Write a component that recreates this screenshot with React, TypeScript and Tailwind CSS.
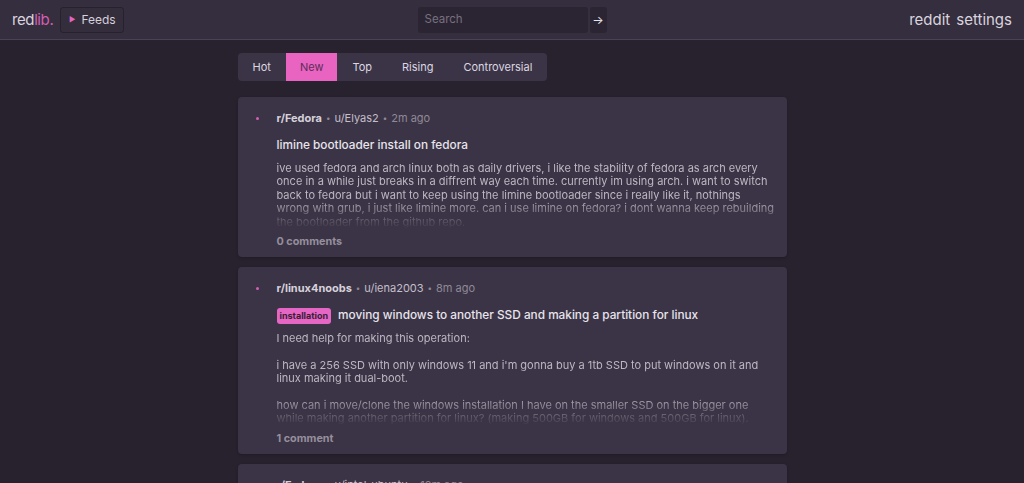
import React from "react";

const font = { fontFamily: "Inter, 'Noto Sans', sans-serif" };

function Header() {
  return (
    <header className="h-[40px] pt-[1px] flex items-center bg-[#352e3e] border-b border-[#4a4356] px-3">
      <div className="flex-1 flex items-center gap-[7px]">
        <div className="text-[15px] tracking-[-0.4px] text-[#d9d4de]">
          red<span className="text-[#d45fb5]">lib.</span>
        </div>
        <div className="h-[26px] w-[64px] flex items-center justify-center gap-[6px] rounded-[3px] border border-[#27212d] bg-[#342d3c] text-[12px] text-[#d6d1db]">
          <span className="text-[#e066c1] text-[7px]">▶</span>
          <span>Feeds</span>
        </div>
      </div>
      <div className="flex items-center gap-[2px]">
        <div className="h-[26px] w-[170px] rounded-[3px] bg-[#2b2533] flex items-center px-[7px] text-[11.5px] text-[#77707f]">
          Search
        </div>
        <div className="h-[26px] w-[17px] rounded-[3px] bg-[#2b2533] flex items-center justify-center text-[#e8e4ec] text-[12px]">
          →
        </div>
      </div>
      <div className="flex-1 flex items-center justify-end gap-[6px] text-[15px] text-[#d9d4de]">
        <span>reddit</span>
        <span>settings</span>
      </div>
    </header>
  );
}

function Tabs() {
  const tabs = ["Hot", "New", "Top", "Rising", "Controversial"];
  return (
    <div className="flex h-[28px] w-fit rounded-[4px] bg-[#3b3446] overflow-hidden text-[11px]">
      {tabs.map((t) => (
        <div
          key={t}
          className={
            t === "New"
              ? "px-[14px] flex items-center bg-[#e864c0] text-[#5e2d59]"
              : "px-[15px] flex items-center text-[#dcd7e1]"
          }
        >
          {t}
        </div>
      ))}
    </div>
  );
}

type PostProps = {
  sub: string;
  user: string;
  time: string;
  flair?: string;
  title: string;
  body: string[];
  comments: string;
};

function Post({ sub, user, time, flair, title, body, comments }: PostProps) {
  return (
    <div className="rounded-[4px] bg-[#3b3446] shadow-[0_1px_3px_rgba(0,0,0,0.25)] flex pt-[14px] pb-[8px] pl-[18px] pr-[12px]">
      <div className="w-[21px] shrink-0 pt-[3px]">
        <div className="w-[3px] h-[3px] rounded-full bg-[#d45fb5] mt-[3px]" />
      </div>
      <div className="flex-1 min-w-0">
        <div className="h-[14px] flex items-center text-[11px] text-[#a49eab]">
          <span className="font-bold text-[#d6d1db]">{sub}</span>
          <span className="mx-[4px] text-[8px] text-[#8e8897]">•</span>
          <span className="text-[#c4bfca]">{user}</span>
          <span className="mx-[4px] text-[8px] text-[#8e8897]">•</span>
          <span className="text-[#8f8996]">{time}</span>
        </div>
        <div className="mt-[12px] h-[18px] flex items-center text-[11.8px] font-medium text-[#e8e4ec]">
          {flair && (
            <span className="mr-[7px] rounded-[3px] bg-[#e566c4] px-[3px] h-[16px] flex items-center text-[9px] font-bold text-[#3a1d36]">
              {flair}
            </span>
          )}
          <span>{title}</span>
        </div>
        <div className="mt-[7px] max-h-[94px] overflow-hidden text-[11px] leading-[13.4px] text-[#bdb7c3] [mask-image:linear-gradient(to_bottom,black_calc(100%-32px),transparent)]">
          {body.map((p, i) => (
            <p key={i} className={i > 0 ? "mt-[13.4px]" : ""}>
              {p}
            </p>
          ))}
        </div>
        <div className="mt-[6px] h-[14px] flex items-center text-[10.8px] font-bold text-[#958f9c]">
          {comments}
        </div>
      </div>
    </div>
  );
}

export default function App() {
  return (
    <div className="min-h-screen bg-[#28222e]" style={font}>
      <Header />
      <main className="w-[549px] mx-auto pt-[13px] flex flex-col">
        <Tabs />
        <div className="mt-[16px] flex flex-col gap-[10px]">
          <Post
            sub="r/Fedora"
            user="u/Elyas2"
            time="2m ago"
            title="limine bootloader install on fedora"
            body={[
              "ive used fedora and arch linux both as daily drivers, i like the stability of fedora as arch every once in a while just breaks in a diffrent way each time. currently im using arch. i want to switch back to fedora but i want to keep using the limine bootloader since i really like it, nothings wrong with grub, i just like limine more. can i use limine on fedora? i dont wanna keep rebuilding the bootloader from the github repo.",
            ]}
            comments="0 comments"
          />
          <Post
            sub="r/linux4noobs"
            user="u/iena2003"
            time="8m ago"
            flair="installation"
            title="moving windows to another SSD and making a partition for linux"
            body={[
              "I need help for making this operation:",
              "i have a 256 SSD with only windows 11 and i'm gonna buy a 1tb SSD to put windows on it and linux making it dual-boot.",
              "how can i move/clone the windows installation I have on the smaller SSD on the bigger one while making another partition for linux? (making 500GB for windows and 500GB for linux).",
            ]}
            comments="1 comment"
          />
          <Post
            sub="r/Fedora"
            user="u/intel_ubuntu"
            time="12m ago"
            title="Fedora 41 on my laptop"
            body={["Just installed it and everything works out of the box."]}
            comments="2 comments"
          />
        </div>
      </main>
    </div>
  );
}
